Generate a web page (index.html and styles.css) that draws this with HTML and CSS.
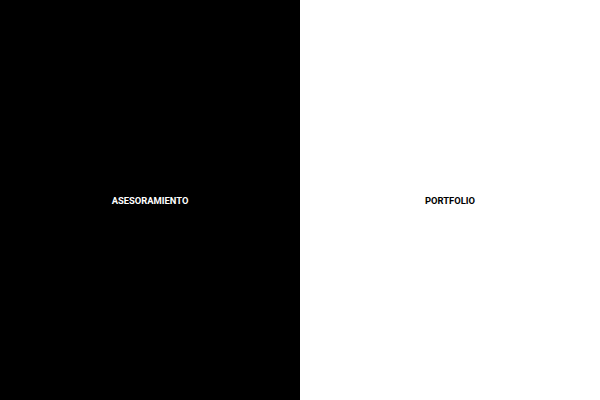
FILE: index.html
```html
<!DOCTYPE html>
<html>
<head>
<meta charset="utf-8">
<link rel="stylesheet" href="styles.css">
</head>
<body>
<main class="split">
  <a class="panel panel-dark" href="#">ASESORAMIENTO</a>
  <a class="panel panel-light" href="#">PORTFOLIO</a>
</main>
</body>
</html>
```
FILE: styles.css
```css
html, body {
  margin: 0;
  padding: 0;
  height: 100%;
}
body {
  font-family: Roboto, "Liberation Sans", sans-serif;
}
.split {
  display: grid;
  grid-template-columns: 1fr 1fr;
  height: 100vh;
}
.panel {
  display: flex;
  align-items: center;
  justify-content: center;
  font-size: 9.4px;
  font-weight: 700;
  text-decoration: none;
  letter-spacing: 0;
}
.panel-dark {
  background: #000;
  color: #fff;
}
.panel-light {
  background: #fff;
  color: #000;
}
```
